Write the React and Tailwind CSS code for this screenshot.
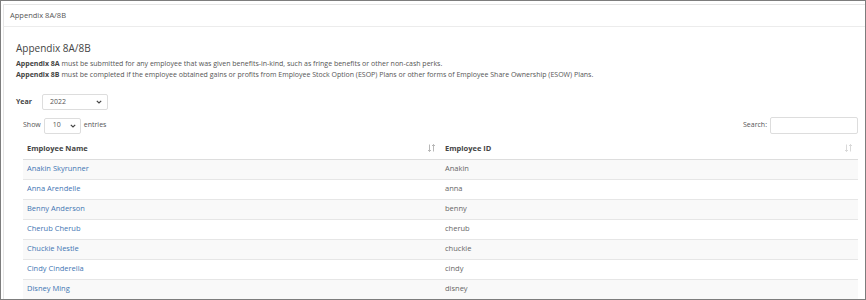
import React from "react";

const employees = [
  { name: "Anakin Skyrunner", id: "Anakin" },
  { name: "Anna Arendelle", id: "anna" },
  { name: "Benny Anderson", id: "benny" },
  { name: "Cherub Cherub", id: "cherub" },
  { name: "Chuckie Nestle", id: "chuckie" },
  { name: "Cindy Cinderella", id: "cindy" },
  { name: "Disney Ming", id: "disney" },
];

const Chevron = () => (
  <svg width="6" height="4" viewBox="0 0 6 4" className="text-[#444]">
    <path d="M0.8 0.8 L3 3 L5.2 0.8" fill="none" stroke="currentColor" strokeWidth="1.2" />
  </svg>
);

const SortIcon = ({ active }) => (
  <svg width="7" height="8" viewBox="0 0 7 8" className={active ? "text-[#b0b0b0]" : "text-[#d5d5d5]"}>
    <path d="M1.5 0.5 V7.5 M0 6 L1.5 7.5 L3 6" fill="none" stroke="currentColor" strokeWidth="0.9" />
    <path d="M5.5 7.5 V0.5 M4 2 L5.5 0.5 L7 2" fill="none" stroke="currentColor" strokeWidth="0.9" />
  </svg>
);

const App = () => {
  return (
    <div
      className="w-[866px] h-[300px] overflow-hidden border border-[#7d7d7d] bg-white text-[#555]"
      style={{ fontFamily: '"Open Sans", "Noto Sans", sans-serif' }}
    >
      <div className="h-full ml-[2px] mt-[3px] border-l border-t border-[#e6e6e6] bg-white">
        {/* Panel header */}
        <div className="h-[22px] flex items-center px-[6px] border-b border-[#ececec] text-[7.5px] text-[#555]">
          Appendix 8A/8B
        </div>

        {/* Panel body */}
        <div className="pl-[12px] pr-[6px] pt-[15px]">
          <h2 className="text-[10px] leading-[13px] text-[#444]">Appendix 8A/8B</h2>
          <div className="mt-[3px] text-[7px] leading-[11px] text-[#555]">
            <p>
              <span className="font-bold text-[#444]">Appendix 8A</span> must be submitted for any employee that was given benefits-in-kind, such as fringe benefits or other non-cash perks.
            </p>
            <p>
              <span className="font-bold text-[#444]">Appendix 8B</span> must be completed if the employee obtained gains or profits from Employee Stock Option (ESOP) Plans or other forms of Employee Share Ownership (ESOW) Plans.
            </p>
          </div>

          <div className="mt-[14px] flex items-center text-[7px]">
            <span className="w-[26px] font-bold text-[#444]">Year</span>
            <div className="w-[66px] h-[16px] flex items-center justify-between pl-[7px] pr-[5px] border border-[#ddd] rounded-[2px] text-[#555]">
              <span>2022</span>
              <Chevron />
            </div>
          </div>

          {/* Table controls */}
          <div className="mt-[7px] ml-[7px] flex items-center justify-between text-[7px]">
            <div className="flex items-center gap-[3px]">
              <span>Show</span>
              <div className="w-[37px] h-[16px] flex items-center justify-between pl-[8px] pr-[4px] border border-[#ddd] rounded-[2px]">
                <span>10</span>
                <Chevron />
              </div>
              <span>entries</span>
            </div>
            <div className="flex items-center gap-[3px] mr-[1px]">
              <span>Search:</span>
              <div className="w-[88px] h-[17px] border border-[#ddd] rounded-[2px]" />
            </div>
          </div>

          {/* Table */}
          <table className="mt-[4px] ml-[7px] w-[835px] border-collapse text-[7.5px]">
            <thead>
              <tr className="h-[21px] border-b border-[#ddd]">
                <th className="w-[418px] pl-[4px] pr-[6px] text-left font-bold text-[#444]">
                  <div className="flex items-center justify-between">
                    <span>Employee Name</span>
                    <SortIcon active />
                  </div>
                </th>
                <th className="pl-[4px] pr-[6px] text-left font-bold text-[#444]">
                  <div className="flex items-center justify-between">
                    <span>Employee ID</span>
                    <SortIcon />
                  </div>
                </th>
              </tr>
            </thead>
            <tbody>
              {employees.map((e, i) => (
                <tr
                  key={e.id}
                  className={`h-[20px] border-b border-[#e6e6e6] ${i % 2 === 0 ? "bg-[#f9f9f9]" : "bg-white"}`}
                >
                  <td className="pl-[4px] text-[#3f76b3]">{e.name}</td>
                  <td className="pl-[4px] text-[#666]">{e.id}</td>
                </tr>
              ))}
            </tbody>
          </table>
        </div>
      </div>
    </div>
  );
};

export default App;
